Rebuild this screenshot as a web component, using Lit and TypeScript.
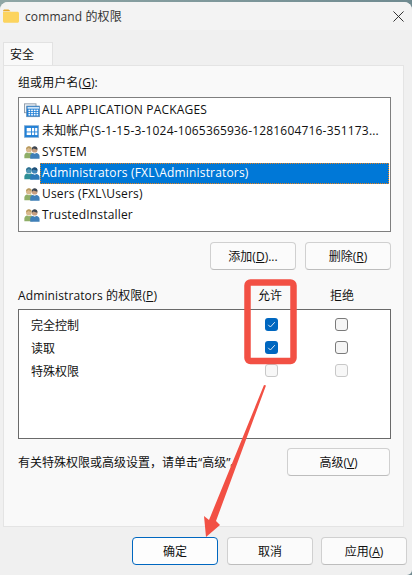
import { LitElement, html, css, svg } from "lit";
import { customElement } from "lit/decorators.js";

const folder = html`<svg class="ficon" viewBox="0 0 16 14" width="16" height="14">
  <path d="M0 2.2C0 1.2.8.6 1.6.6h3.6c.6 0 1 .2 1.3.6l1 1.1H0z" fill="#e8a92c"/>
  <path d="M0 2.8h14.4c.9 0 1.6.7 1.6 1.5v8c0 .9-.7 1.5-1.6 1.5H1.6C.7 13.8 0 13.2 0 12.3z" fill="#fcd45f"/>
</svg>`;

const appIcon = html`<svg class="icon" viewBox="0 0 18 16">
  <rect x=".5" y=".5" width="13" height="10" fill="#eef3f8" stroke="#8a97a6"/>
  <rect x="3" y="3" width="14.5" height="12" fill="#1f7fd6" stroke="#5f87ad" stroke-width=".8"/>
  <rect x="4" y="4" width="13" height="2" fill="#cfe4f7"/>
  ${[7, 9.5, 12].map((y) => [5, 8, 11, 14].map((x) => svg`<rect x=${x} y=${y} width="2" height="1.6" fill="#fff"/>`))}
</svg>`;

const sidIcon = html`<svg class="icon" viewBox="0 0 18 16">
  <rect x=".5" y="1.5" width="16" height="13" fill="#1f7fd6" stroke="#7fa8cf" stroke-width=".8"/>
  <rect x="3" y="4" width="5" height="4" fill="#fff"/><rect x="9" y="4" width="2.5" height="4" fill="#fff"/><rect x="12.5" y="4" width="2.5" height="4" fill="#fff"/>
  <rect x="3" y="9" width="5" height="3" fill="#fff"/><rect x="9" y="9" width="2.5" height="3" fill="#fff"/><rect x="12.5" y="9" width="2.5" height="3" fill="#fff"/>
</svg>`;

const groupIcon = (sel = false) => {
  const hairBack = sel ? "#2f6f8f" : "#b79a5e";
  const faceBack = sel ? "#4f97b5" : "#d9b98d";
  const bodyBack = sel ? "#2f8f96" : "#8fae68";
  const hairFront = sel ? "#1f4f78" : "#3c4652";
  const faceFront = sel ? "#3f86b8" : "#c79f80";
  const bodyFront = sel ? "#2a79b8" : "#3f7fb8";
  return html`<svg class="icon" viewBox="0 0 18 16">
    <circle cx="5.5" cy="4.6" r="3.3" fill=${faceBack}/>
    <path d="M2.3 4.4C2.4 1.8 4 .9 5.6.9s3.1 1 3.1 3c-1.800.1-3-.5-3.800-1.300-.5.8-1.400 1.600-2.600 1.800z" fill=${hairBack}/>
    <path d="M.4 14.400v-3c0-2 1.600-3.200 3-3.500l2.200 1 2.200-1c1.200.3 2.200 1.200 2.200 2.500v4z" fill=${bodyBack}/>
    <circle cx="12" cy="4.800" r="3.200" fill=${faceFront}/>
    <path d="M8.800 4.600C8.800 2.100 10.300.9 12 .9s3.200 1.100 3.200 3.700c-1.800-.3-3.800-.6-4.300-1.500-.3.7-1.200 1.300-2.100 1.500z" fill=${hairFront}/>
    <path d="M7 15v-3.200c0-1.800 1.500-3 3-3.200l2 .9 2-.9c1.700.3 3.500 1.400 3.500 3.200V15z" fill=${bodyFront}/>
  </svg>`;
};

const users = [
  { icon: appIcon, name: "ALL APPLICATION PACKAGES" },
  { icon: sidIcon, name: "未知帐户(S-1-15-3-1024-1065365936-1281604716-351173..." },
  { icon: groupIcon(), name: "SYSTEM" },
  { icon: groupIcon(true), name: "Administrators (FXL\\Administrators)", selected: true },
  { icon: groupIcon(), name: "Users (FXL\\Users)" },
  { icon: groupIcon(), name: "TrustedInstaller" },
];

const perms = [
  { name: "完全控制", allow: "on", deny: "off" },
  { name: "读取", allow: "on", deny: "off" },
  { name: "特殊权限", allow: "dis", deny: "dis" },
];

const check = (state: string) => html`<span class="cb ${state}">
  ${state === "on"
    ? html`<svg viewBox="0 0 13 13" width="13" height="13"><path d="M3.2 6.8l2.200 2.200 4.400-4.800" fill="none" stroke="#dfeaf6" stroke-width="1"/></svg>`
    : ""}
</span>`;

@customElement("app-root")
export class AppRoot extends LitElement {
  static styles = css`
    :host {
      display: block;
      width: 412px;
      height: 575px;
      overflow: hidden;
      position: relative;
      background: linear-gradient(90deg, #8fa6a6, #6f8a90);
      font-family: "Open Sans", "Noto Sans CJK SC", sans-serif;
      font-size: 12px;
      color: #111;
    }
    .window {
      margin-top: 2px;
      height: 573px;
      display: flex;
      flex-direction: column;
      background: #f0f0f0;
      border-radius: 8px 8px 5px 0;
      overflow: hidden;
    }
    .title {
      height: 28px;
      flex: none;
      display: flex;
      align-items: center;
      background: #f3f3f3;
      padding: 0 8px 0 3px;
      gap: 6px;
      font-size: 12px;
      letter-spacing: .1px;
      color: #333;
    }
    .ficon { flex: none; }
    .title .text { flex: 1; }
    .close { flex: none; display: block; }
    .tabs {
      flex: none;
      height: 35px;
      display: flex;
      align-items: flex-end;
      padding-left: 3px;
    }
    .tab {
      width: 50px;
      height: 23px;
      box-sizing: border-box;
      background: #f9f9f9;
      border: 1px solid #e2e2e2;
      border-bottom: none;
      display: flex;
      align-items: center;
      padding-left: 6px;
    }
    .panel {
      flex: none;
      height: 462px;
      width: 401px;
      margin-left: 3px;
      box-sizing: border-box;
      border: 1px solid #e4e4e4;
      background: #f9f9f9;
      padding: 0 12px 0 14px;
      display: flex;
      flex-direction: column;
    }
    .lbl { height: 31px; display: flex; align-items: center; letter-spacing: .1px; }
    .lbl u, .foot u, .btn u, .perm-head u { text-underline-offset: 1px; text-decoration-thickness: 1px; }
    .list {
      height: 135px;
      box-sizing: border-box;
      border: 1px solid #7f7f7f;
      background: #fff;
      padding: 2px 1px;
      overflow: hidden;
    }
    .row {
      height: 21px;
      display: flex;
      align-items: center;
      padding-left: 4px;
      white-space: nowrap;
    }
    .icon { flex: none; width: 16px; height: 15px; display: block; }
    .name {
      padding: 0 2px;
      height: 21px;
      line-height: 20px;
      box-sizing: border-box;
      flex: none;
      letter-spacing: .18px;
    }
    .row.sel .name {
      flex: 1;
      background: #0078d7;
      color: #fff;
      outline: 1px dotted #e8801a;
      outline-offset: -1px;
    }
    .btns {
      display: flex;
      justify-content: flex-end;
      gap: 9px;
      margin-top: 10px;
    }
    .btn {
      box-sizing: border-box;
      width: 86px;
      height: 28px;
      flex: none;
      display: flex;
      align-items: center;
      justify-content: center;
      background: #fbfbfb;
      border: 1px solid #d0d0d0;
      border-bottom-color: #bdbdbd;
      border-radius: 4px;
      color: #111;
    }
    .btn.primary { border: 1px solid #0067c0; background: #fdfdfd; margin-right: 1px; }
    .perm-head {
      display: grid;
      grid-template-columns: 1fr 72px 61px;
      height: 39px;
      align-items: end;
      padding-bottom: 5px;
      box-sizing: border-box;
    }
    .perm-head span:first-child { letter-spacing: .12px; }
    .perms {
      height: 130px;
      box-sizing: border-box;
      border: 1px solid #6a6a6a;
      background: #fff;
      padding-top: 3px;
    }
    .prow {
      height: 23px;
      display: grid;
      grid-template-columns: 1fr 70px 55px;
      align-items: center;
      padding-left: 12px;
    }
    .cb {
      box-sizing: border-box;
      width: 13px;
      height: 13px;
      border-radius: 3px;
      border: 1px solid #7a7a7a;
      background: #f5f5f5;
      display: block;
    }
    .cb svg { display: block; }
    .cb.on { border: none; background: #0067c0; }
    .cb.dis { border-color: #c8c8c8; background: #f7f7f7; }
    .foot {
      display: flex;
      align-items: center;
      justify-content: space-between;
      margin-top: 9px;
      height: 28px;
      padding-right: 1px;
    }
    .foot .btn { width: 103px; }
    .actions {
      display: flex;
      gap: 8px;
      justify-content: flex-end;
      padding: 10px 5px 0 0;
    }
    .mark { position: absolute; inset: 0; width: 412px; height: 575px; pointer-events: none; }
  `;

  render() {
    return html`
      <div class="window">
        <div class="title">
          ${folder}
          <span class="text">command 的权限</span>
          <svg class="close" viewBox="0 0 12 12" width="11" height="11"><path d="M.5.5l11 11M11.500.5l-11 11" stroke="#222" stroke-width="1" fill="none"/></svg>
        </div>
        <div class="tabs"><div class="tab">安全</div></div>
        <div class="panel">
          <div class="lbl"><span>组或用户名(<u>G</u>):</span></div>
          <div class="list">
            ${users.map(
              (u) => html`<div class="row ${u.selected ? "sel" : ""}">${u.icon}<span class="name">${u.name}</span></div>`
            )}
          </div>
          <div class="btns">
            <div class="btn">添加(<u>D</u>)...</div>
            <div class="btn">删除(<u>R</u>)</div>
          </div>
          <div class="perm-head">
            <span>Administrators 的权限(<u>P</u>)</span>
            <span>允许</span>
            <span>拒绝</span>
          </div>
          <div class="perms">
            ${perms.map(
              (p) => html`<div class="prow"><span>${p.name}</span>${check(p.allow)}${check(p.deny)}</div>`
            )}
          </div>
          <div class="foot">
            <span>有关特殊权限或高级设置，请单击“高级”。</span>
            <div class="btn">高级(<u>V</u>)</div>
          </div>
        </div>
        <div class="actions">
          <div class="btn primary">确定</div>
          <div class="btn">取消</div>
          <div class="btn">应用(<u>A</u>)</div>
        </div>
      </div>
      <svg class="mark" viewBox="0 0 412 575">
        <rect x="247.500" y="282.500" width="46" height="78.500" rx="3" fill="none" stroke="#f25044" stroke-width="6.500"/>
        <path d="M264 385L266 385.500L216 521L220 525L206 537L204 516L209 520z" fill="#f25044"/>
      </svg>
    `;
  }
}
